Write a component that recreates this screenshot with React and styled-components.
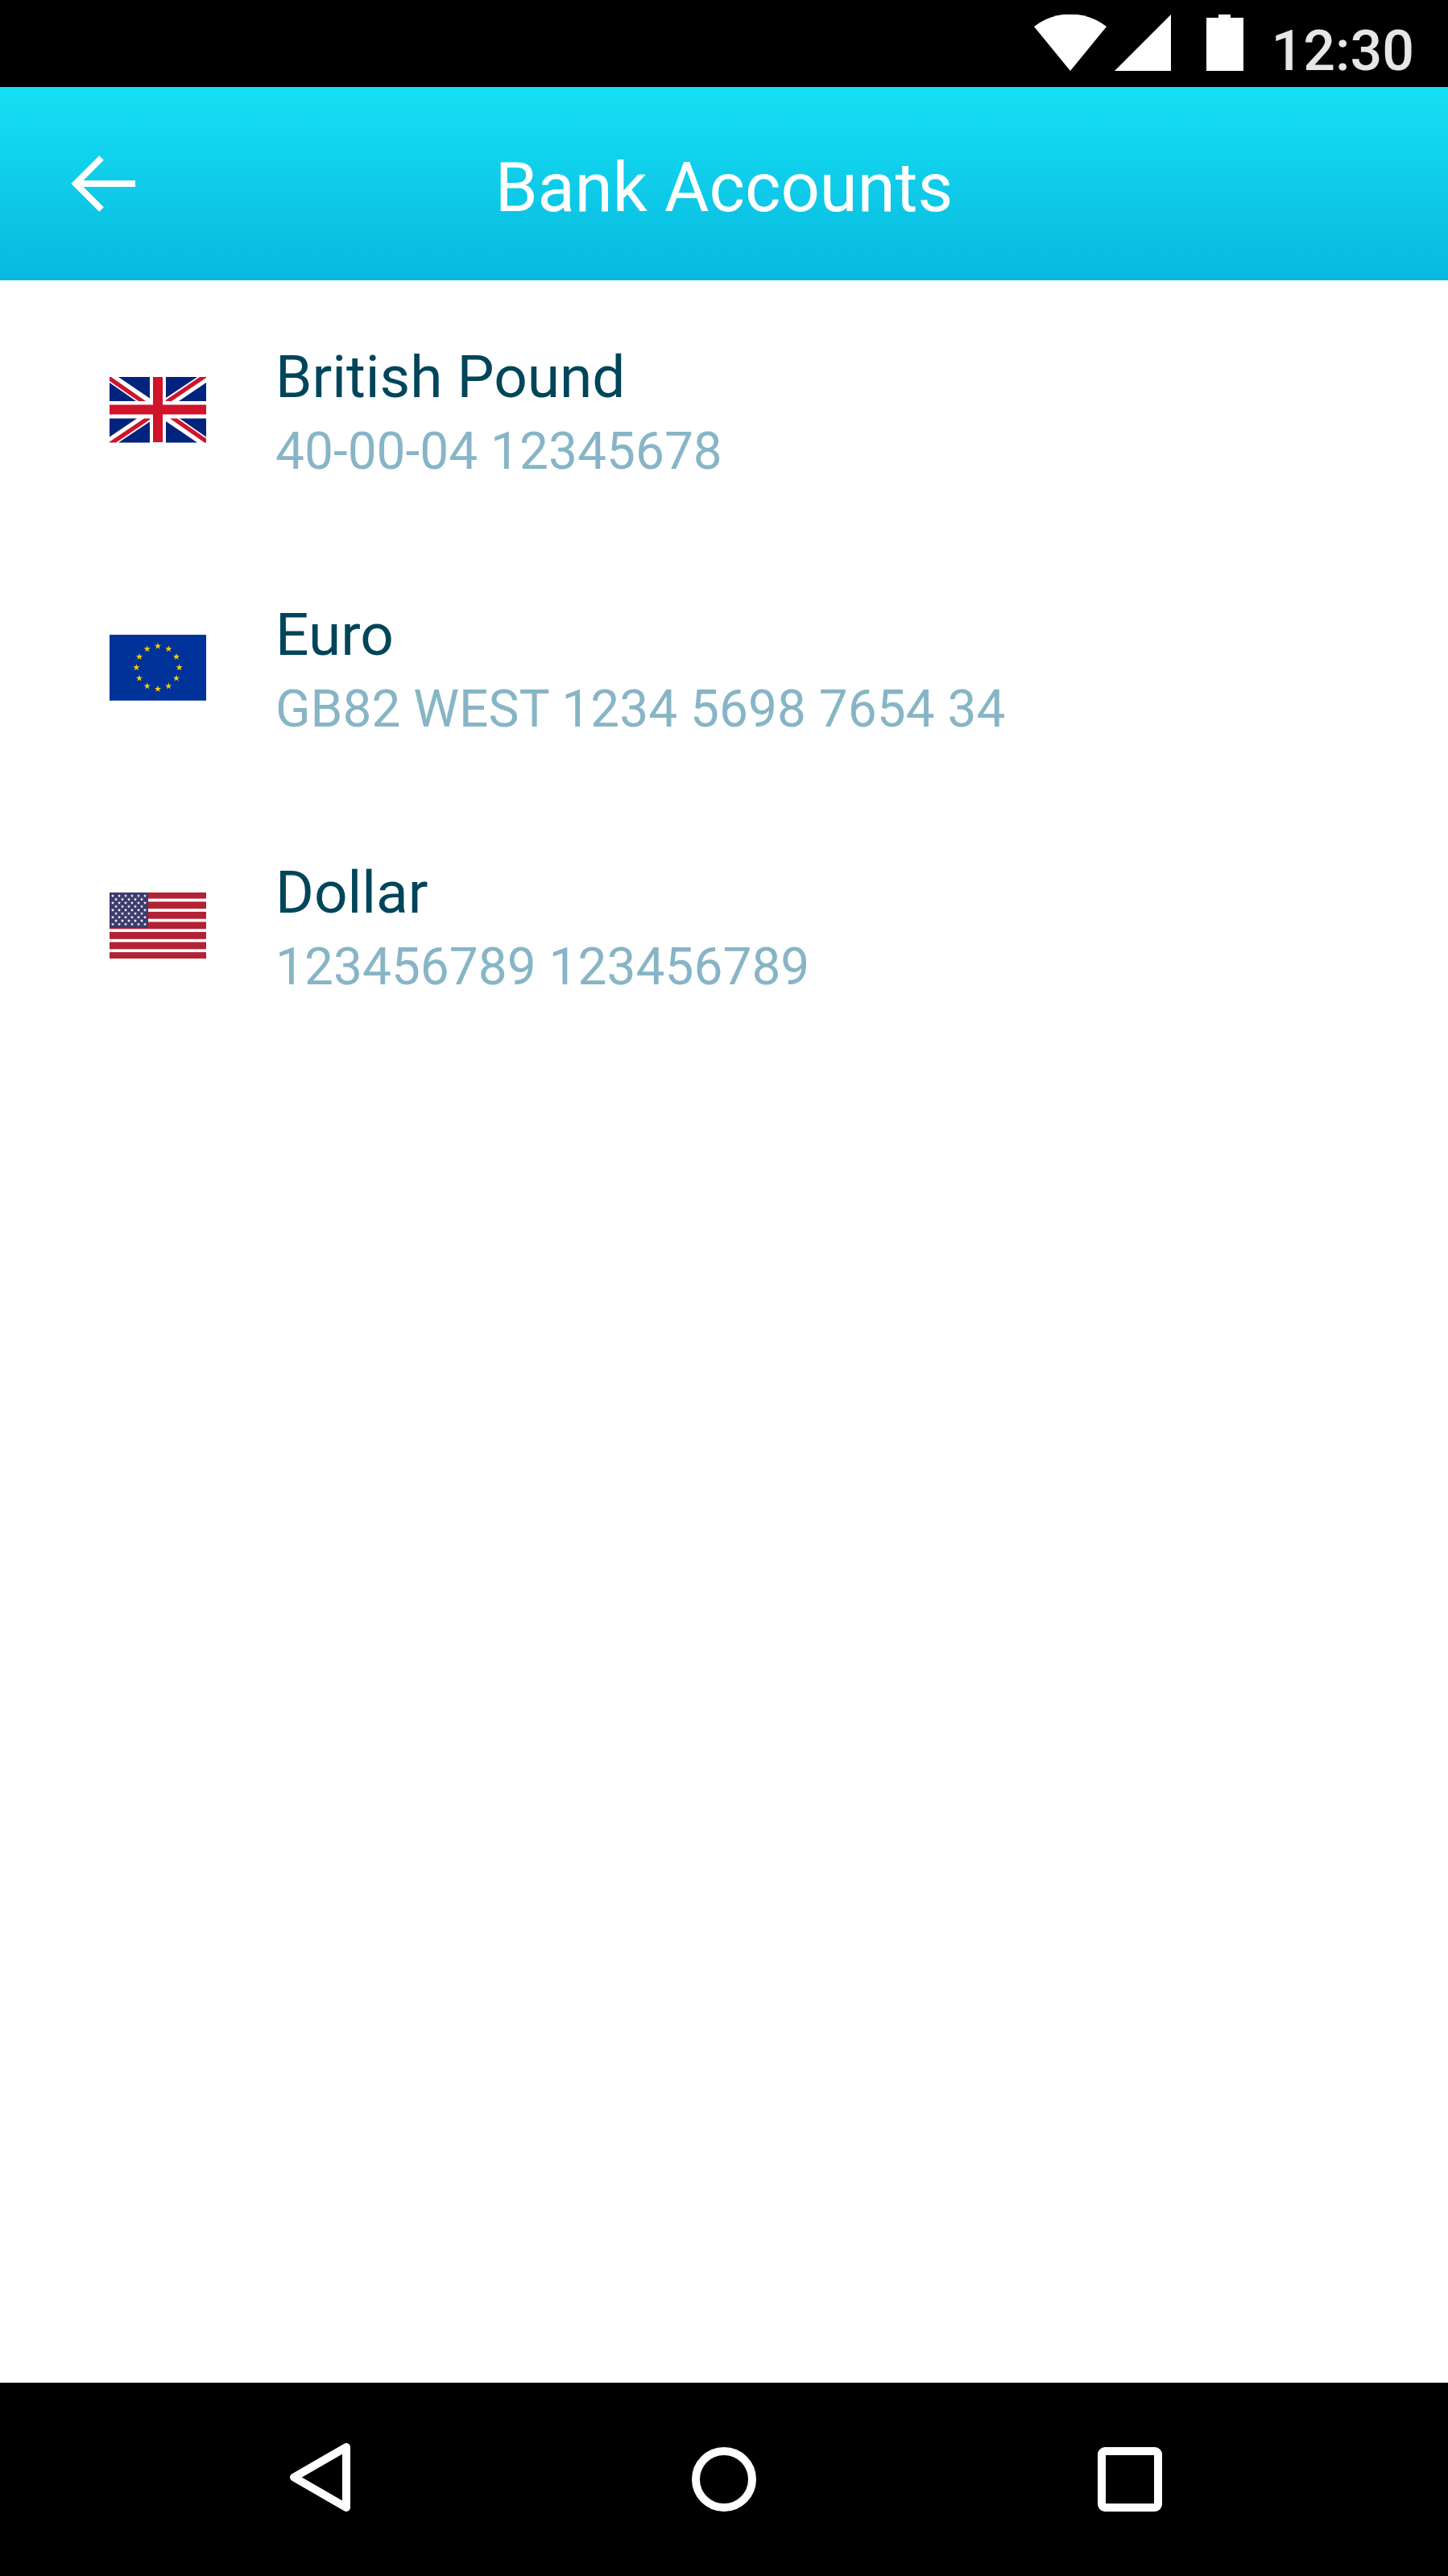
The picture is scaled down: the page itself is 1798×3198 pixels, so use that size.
import React from "react";
import styled, { createGlobalStyle } from "styled-components";

const GlobalStyle = createGlobalStyle`
  *, *::before, *::after {
    box-sizing: border-box;
  }
  body {
    margin: 0;
    background: #ffffff;
    font-family: Roboto, "Liberation Sans", sans-serif;
  }
`;

const Screen = styled.div`
  display: flex;
  flex-direction: column;
  min-height: 100vh;
`;

const StatusBar = styled.div`
  display: flex;
  justify-content: flex-end;
  align-items: flex-start;
  gap: 10px;
  height: 108px;
  padding: 18px 42px 0 0;
  background: #000000;

  svg {
    display: block;
    flex: none;
    fill: #ffffff;
  }
`;

const Clock = styled.time`
  color: #e6e6e6;
  font-size: 70px;
  font-weight: 500;
  line-height: 90px;
`;

const Header = styled.header`
  display: grid;
  grid-template-columns: 168px 1fr 168px;
  align-items: center;
  height: 240px;
  background: linear-gradient(#16e0f3, #08b8df);
`;

const BackButton = styled.button`
  display: flex;
  justify-content: flex-end;
  align-items: center;
  height: 100%;
  padding: 0;
  border: 0;
  background: none;
  cursor: pointer;
`;

const Title = styled.h1`
  margin: 0;
  padding-top: 10px;
  color: #ffffff;
  font-size: 85px;
  font-weight: 400;
  line-height: 100px;
  text-align: center;
`;

const Main = styled.main`
  flex: 1;
`;

const AccountList = styled.ul`
  margin: 0;
  padding: 0;
  list-style: none;
`;

const Account = styled.li`
  display: flex;
  align-items: center;
  gap: 86px;
  height: 320px;
  padding: 2px 136px 0;
`;

const Flag = styled.svg`
  display: block;
  flex: none;
  width: 120px;
  height: 82px;
`;

const Details = styled.div`
  padding-top: 12px;
`;

const Currency = styled.h2`
  margin: 0;
  color: #00455a;
  font-size: 73px;
  font-weight: 400;
  line-height: 92px;
`;

const AccountNumber = styled.p`
  margin: 0;
  color: #87b5c6;
  font-size: 64px;
  line-height: 94px;
`;

const NavBar = styled.nav`
  display: grid;
  grid-template-columns: repeat(3, 28%);
  justify-content: center;
  height: 240px;
  background: #000000;
`;

const NavButton = styled.button`
  display: flex;
  justify-content: center;
  align-items: center;
  padding: 0;
  border: 0;
  background: none;
  cursor: pointer;

  svg {
    display: block;
    width: 90px;
    height: 90px;
    fill: none;
    stroke: #ffffff;
    stroke-width: 10px;
    stroke-linejoin: round;
  }
`;

const starPoints = (cx, cy, r) =>
  Array.from({ length: 10 }, (_, i) => {
    const radius = i % 2 ? r * 0.382 : r;
    const angle = (i * Math.PI) / 5 - Math.PI / 2;
    return `${cx + radius * Math.cos(angle)},${cy + radius * Math.sin(angle)}`;
  }).join(" ");

function UnionJackDiagonals() {
  return (
    <>
      <path fill="#00247d" d="M11 0H50V26.5ZM0 7V30H33ZM70 0H109L70 26ZM120 7V30H86Z" />
      <path fill="#cf142b" d="M0 0H2L45 30H36L0 5ZM112 0H120V1L77 30H70V28.5Z" />
    </>
  );
}

function BritishFlag() {
  return (
    <Flag viewBox="0 0 120 82" role="img" aria-label="United Kingdom">
      <path fill="#ffffff" d="M0 0H120V82H0Z" />
      <UnionJackDiagonals />
      <g transform="rotate(180 60 40.75)">
        <UnionJackDiagonals />
      </g>
      <path fill="#cf142b" d="M54 0H66V34.5H120V46.5H66V81H54V46.5H0V34.5H54Z" />
    </Flag>
  );
}

function EuropeanFlag() {
  return (
    <Flag viewBox="0 0 120 82" role="img" aria-label="European Union">
      <path fill="#003399" d="M0 0H120V81.7H0Z" />
      {Array.from({ length: 12 }, (_, i) => {
        const angle = (i * Math.PI) / 6;
        return (
          <polygon
            key={i}
            fill="#ffcc00"
            points={starPoints(60 + 26.6 * Math.cos(angle), 40.7 + 26.6 * Math.sin(angle), 4.4)}
          />
        );
      })}
    </Flag>
  );
}

function AmericanFlag() {
  const stars = [];
  for (let row = 0; row < 9; row += 1) {
    const odd = row % 2;
    for (let col = 0; col < 6 - odd; col += 1) {
      stars.push([4 + odd * 4 + col * 8, 4.1 + row * 4.42]);
    }
  }
  return (
    <Flag viewBox="0 0 120 82" role="img" aria-label="United States">
      <path fill="#ffffff" d="M0 0H120V81.7H0Z" />
      {Array.from({ length: 7 }, (_, i) => (
        <rect key={i} fill="#b22234" x="0" y={-1.2 + i * 12.55} width="120" height="8.8" />
      ))}
      <path fill="#3c3b6e" d="M0 0H48V44H0Z" />
      {stars.map(([x, y]) => (
        <polygon key={`${x}-${y}`} fill="#ffffff" points={starPoints(x, y, 2.3)} />
      ))}
    </Flag>
  );
}

const accounts = [
  { currency: "British Pound", number: "40-00-04 12345678", FlagIcon: BritishFlag },
  { currency: "Euro", number: "GB82 WEST 1234 5698 7654 34", FlagIcon: EuropeanFlag },
  { currency: "Dollar", number: "123456789 123456789", FlagIcon: AmericanFlag },
];

export default function App() {
  return (
    <Screen>
      <GlobalStyle />
      <StatusBar>
        <svg width="90" height="70" viewBox="0 0 90 70" aria-hidden="true">
          <path d="M0 15A73 73 0 0 1 90 15L45 70Z" />
        </svg>
        <svg width="70" height="70" viewBox="0 0 70 70" aria-hidden="true">
          <path d="M70 0V70H0Z" />
        </svg>
        <svg width="104" height="70" viewBox="0 0 104 70" aria-hidden="true">
          <path d="M49 0H64V4H80V70H34V4H49Z" />
        </svg>
        <Clock>12:30</Clock>
      </StatusBar>
      <Header>
        <BackButton type="button" aria-label="Back">
          <svg width="80" height="72" viewBox="0 0 80 72" aria-hidden="true">
            <path fill="none" stroke="#ffffff" strokeWidth="8" d="M80 36H10M38 4L6 36L38 68" />
          </svg>
        </BackButton>
        <Title>Bank Accounts</Title>
      </Header>
      <Main>
        <AccountList>
          {accounts.map(({ currency, number, FlagIcon }) => (
            <Account key={currency}>
              <FlagIcon />
              <Details>
                <Currency>{currency}</Currency>
                <AccountNumber>{number}</AccountNumber>
              </Details>
            </Account>
          ))}
        </AccountList>
      </Main>
      <NavBar aria-label="System navigation">
        <NavButton type="button" aria-label="Back">
          <svg viewBox="0 0 90 90" aria-hidden="true">
            <path d="M79 5V80L14 42.5Z" />
          </svg>
        </NavButton>
        <NavButton type="button" aria-label="Home">
          <svg viewBox="0 0 90 90" aria-hidden="true">
            <circle cx="45" cy="45" r="35" />
          </svg>
        </NavButton>
        <NavButton type="button" aria-label="Recent apps">
          <svg viewBox="0 0 90 90" aria-hidden="true">
            <path
              fill="#ffffff"
              fillRule="evenodd"
              stroke="none"
              d="M15 5H77A9 9 0 0 1 86 14V76A9 9 0 0 1 77 85H15A9 9 0 0 1 6 76V14A9 9 0 0 1 15 5ZM16 15V75H76V15Z"
            />
          </svg>
        </NavButton>
      </NavBar>
    </Screen>
  );
}
